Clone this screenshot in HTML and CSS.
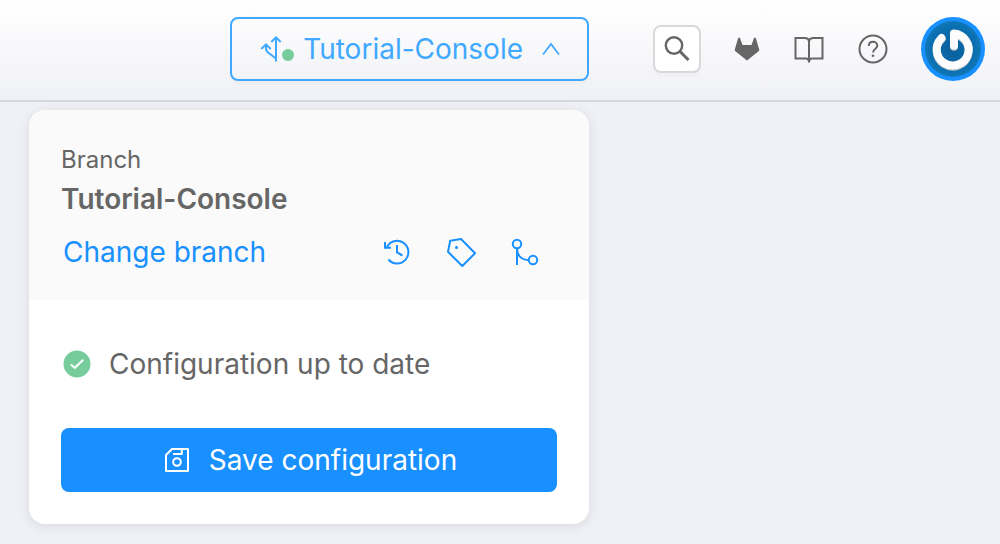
FILE: index.html
```html
<!DOCTYPE html>
<html lang="en">
<head>
<meta charset="utf-8">
<meta name="viewport" content="width=device-width, initial-scale=1">
<title>Tutorial-Console</title>
<link rel="stylesheet" href="styles.css">
</head>
<body>
<header class="topbar">
  <button class="branch-toggle" type="button" aria-expanded="true" aria-controls="branch-panel">
    <svg class="branch-icon" width="36" height="32" viewBox="0 0 36 32" aria-hidden="true">
      <g fill="none" stroke="currentColor" stroke-width="2">
        <path d="M17 28.500V5M12.300 9 17 4.300 21.700 9"/>
        <path d="M17 25.500 9 19.500Q7 17.500 7 15.500V12M2.300 16 7 11.300 11.700 16"/>
      </g>
      <circle class="status-dot" cx="29" cy="22" r="6"/>
    </svg>
    <span>Tutorial-Console</span>
    <svg width="20" height="32" viewBox="0 0 20 32" aria-hidden="true">
      <path d="M2 21.500 10 11 18 21.500" fill="none" stroke="currentColor" stroke-width="1.800"/>
    </svg>
  </button>
  <nav class="tools">
    <button class="search" type="button" aria-label="Search">
      <svg width="32" height="32" viewBox="0 0 32 32" fill="none" stroke="currentColor" aria-hidden="true">
        <circle cx="13" cy="12.500" r="8.200" stroke-width="2.400"/>
        <path d="M18.800 18.300 27.500 27" stroke-width="3"/>
      </svg>
    </button>
    <a class="tool" href="#gitlab" aria-label="GitLab">
      <svg width="28" height="32" viewBox="0 0 28 32" fill="currentColor" aria-hidden="true">
        <path d="M5 5.500Q6 3.500 7.200 5.500L9.500 12H18.500L20.800 5.500Q22 3.500 23 5.500L26.200 16.500Q26.600 17.500 25.600 18.300L14 27.500 2.400 18.300Q1.400 17.500 1.800 16.500Z"/>
      </svg>
    </a>
    <a class="tool" href="#docs" aria-label="Documentation">
      <svg width="32" height="32" viewBox="0 0 32 32" fill="none" stroke="currentColor" stroke-width="2" aria-hidden="true">
        <path d="M16 9Q16 5 11.500 5H2.500V25.500H13Q16 25.500 16 29.500Q16 25.500 19 25.500H29.500V5H20.500Q16 5 16 9V29.500"/>
      </svg>
    </a>
    <a class="tool" href="#help" aria-label="Help">
      <svg width="32" height="32" viewBox="0 0 32 32" fill="none" stroke="currentColor" stroke-width="2" aria-hidden="true">
        <circle cx="16" cy="16" r="13.500"/>
        <path d="M11.800 13C11.800 10.500 13.500 8.800 16 8.800S20.300 10.500 20.300 12.800C20.300 15.500 16 16 16 19.500"/>
        <circle cx="16" cy="22.800" r="1.300" fill="currentColor" stroke="none"/>
      </svg>
    </a>
    <button class="avatar" type="button" aria-label="Account">
      <svg width="64" height="64" viewBox="0 0 64 64" aria-hidden="true">
        <defs>
          <radialGradient id="disc">
            <stop offset="0" stop-color="#0a5f9c"/>
            <stop offset="0.800" stop-color="#0b6fb0"/>
            <stop offset="1" stop-color="#1078b8"/>
          </radialGradient>
        </defs>
        <circle cx="32" cy="32" r="32" fill="#1890ff"/>
        <circle cx="32" cy="32" r="28" fill="url(#disc)"/>
        <g fill="none" stroke-width="8" stroke-linecap="round" stroke-linejoin="round">
          <path d="M20.500 21.500A16 16 0 1 0 33 17V29" stroke="#b9c3ca" transform="translate(0 0.700)"/>
          <path d="M20.500 21A16 16 0 1 0 33 16.500V28.500" stroke="#fcfcfc"/>
        </g>
      </svg>
    </button>
  </nav>
</header>
<main class="page">
  <section class="panel" id="branch-panel">
    <div class="panel-head">
      <p class="label">Branch</p>
      <h2 class="title">Tutorial-Console</h2>
      <div class="actions">
        <a class="change" href="#change">Change branch</a>
        <button class="icon-button" type="button" aria-label="History">
          <svg width="32" height="32" viewBox="0 0 32 32" fill="none" stroke="currentColor" stroke-width="2" aria-hidden="true">
            <path d="M5.800 11.500A11.300 11.300 0 1 1 7.500 23.500M4 6V11.800H10M16 9V16.500L21.500 19.500"/>
          </svg>
        </button>
        <button class="icon-button" type="button" aria-label="Tags">
          <svg width="32" height="32" viewBox="0 0 32 32" fill="none" stroke="currentColor" stroke-width="2" stroke-linejoin="round" aria-hidden="true">
            <path d="M5.200 4.800 16 3 30 17.300 17.300 30 3 15.800Z"/>
            <circle cx="11.500" cy="11.500" r="1.500" fill="currentColor" stroke="none"/>
          </svg>
        </button>
        <button class="icon-button" type="button" aria-label="Merge requests">
          <svg width="32" height="32" viewBox="0 0 32 32" fill="none" stroke="currentColor" stroke-width="2" aria-hidden="true">
            <circle cx="8" cy="8" r="4.200"/>
            <circle cx="24" cy="24" r="4.200"/>
            <path d="M8 12.200V29M8 12.500C8 19.500 12.500 24 19.800 24"/>
          </svg>
        </button>
      </div>
    </div>
    <div class="panel-body">
      <p class="status">
        <svg width="32" height="32" viewBox="0 0 32 32" aria-hidden="true">
          <circle class="status-dot" cx="16" cy="16" r="13.500"/>
          <path d="M9.800 16.500 13.800 19.800 22.300 11.800" fill="none" stroke="#fff" stroke-width="2"/>
        </svg>
        <span>Configuration up to date</span>
      </p>
      <button class="save" type="button">
        <svg width="32" height="32" viewBox="0 0 32 32" fill="none" stroke="currentColor" stroke-width="2" stroke-linejoin="round" aria-hidden="true">
          <path d="M11 5H27V27H5V11ZM20.800 5V10H12"/>
          <circle cx="16" cy="18" r="3.800"/>
        </svg>
        <span>Save configuration</span>
      </button>
    </div>
  </section>
</main>
</body>
</html>
```
FILE: styles.css
```css
* {
  box-sizing: border-box;
}

body {
  margin: 0;
  background: #f0f1f6;
  color: #666;
  font-family: Inter, "Liberation Sans", sans-serif;
  font-size: 28px;
  line-height: 42px;
}

p,
h2 {
  margin: 0;
}

button {
  padding: 0;
  border: 0;
  background: none;
  color: inherit;
  font: inherit;
  cursor: pointer;
}

a {
  color: inherit;
  text-decoration: none;
}

svg {
  display: block;
  flex: none;
}

.topbar {
  display: flex;
  justify-content: flex-end;
  align-items: center;
  gap: 64px;
  padding: 17px 15px 19px;
  border-bottom: 2px solid #d6d7db;
  background: linear-gradient(#fff, #f0f1f6);
}

.branch-toggle {
  display: flex;
  align-items: center;
  height: 64px;
  padding: 0 26px 0 27px;
  border: 2px solid #40a9ff;
  border-radius: 8px;
  color: #40a9ff;
  box-shadow: 0 4px 0 rgba(0, 0, 0, 0.015);
}

.branch-toggle span {
  margin: 0 18px 0 8px;
}

.status-dot {
  fill: #76cc9b;
}

.tools {
  display: flex;
  align-items: center;
  gap: 32px;
}

.search {
  display: grid;
  place-items: center;
  width: 48px;
  height: 48px;
  border: 2px solid #d9d9d9;
  border-radius: 8px;
  background: #fff;
  box-shadow: 0 4px 0 rgba(0, 0, 0, 0.015);
}

.avatar {
  border-radius: 50%;
}

.page {
  padding: 8px 29px 20px;
}

.panel {
  max-width: 560px;
  border-radius: 16px;
  background: #fff;
  box-shadow: 0 2px 12px rgba(0, 0, 0, 0.1);
  overflow: hidden;
}

.panel-head {
  padding: 32px 32px 16px;
  background: #fafafa;
}

.label {
  font-size: 24px;
  line-height: 36px;
}

.title {
  font-size: 28px;
  font-weight: 600;
}

.actions {
  display: flex;
  align-items: center;
  color: #1890ff;
}

.change {
  margin-right: auto;
  padding-left: 2px;
}

.icon-button {
  display: grid;
  place-items: center;
  width: 64px;
  height: 64px;
}

.panel-body {
  display: grid;
  gap: 32px;
  padding: 32px;
}

.status,
.save {
  display: flex;
  align-items: center;
  gap: 16px;
  height: 64px;
}

.save {
  justify-content: center;
  border-radius: 8px;
  background: #1890ff;
  color: #fff;
}
```
